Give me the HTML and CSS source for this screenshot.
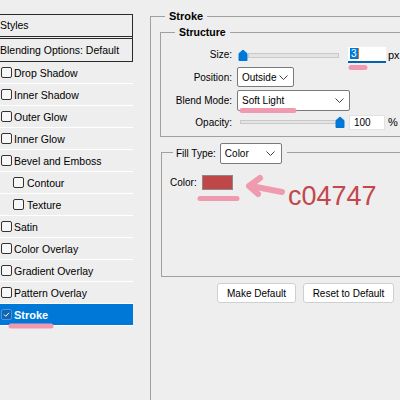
FILE: index.html
```html
<!DOCTYPE html>
<html lang="en">
<head>
  <meta charset="UTF-8" />
  <title>Layer Style</title>
  <link rel="stylesheet" href="styles.css">
</head>
<body>
  <div class="window">
    <div class="styles-list">
      <div class="list-head">Styles</div>
      <div class="list-blend">Blending Options: Default</div>
      <ul class="effects">
        <li><span class="check"></span>Drop Shadow</li>
        <li><span class="check"></span>Inner Shadow</li>
        <li><span class="check"></span>Outer Glow</li>
        <li><span class="check"></span>Inner Glow</li>
        <li><span class="check"></span>Bevel and Emboss</li>
        <li class="sub"><span class="check"></span>Contour</li>
        <li class="sub"><span class="check"></span>Texture</li>
        <li><span class="check"></span>Satin</li>
        <li><span class="check"></span>Color Overlay</li>
        <li><span class="check"></span>Gradient Overlay</li>
        <li><span class="check"></span>Pattern Overlay</li>
        <li class="active">
          <span class="check">
            <svg width="9" height="9" viewBox="0 0 9 9"><polyline points="2,4.5 3.8,6.3 7,2.8" fill="none" stroke="#fff" stroke-width="1"/></svg>
          </span>Stroke
        </li>
      </ul>
    </div>

    <div class="panel">
      <div class="group stroke-group">
        <div class="group-title">Stroke</div>

        <div class="group structure">
          <div class="group-title">Structure</div>

          <div class="field size-row">
            <label>Size:</label>
            <div class="slider size-slider">
              <svg class="thumb" width="10" height="12" viewBox="0 0 10 12"><path d="M1 11.5 V4.5 L5 1 L9 4.5 V11.5 Z" fill="#0078d7" stroke="#0078d7" stroke-linejoin="round"/></svg>
              <div class="track"></div>
            </div>
            <div class="num focused"><span class="sel">3</span><span class="caret"></span></div>
            <span class="unit">px</span>
          </div>

          <div class="field pos-row">
            <label>Position:</label>
            <div class="select pos-select">
              <span>Outside</span>
              <svg width="9" height="5" viewBox="0 0 9 5"><polyline points="0.5,0.5 4.5,4.5 8.5,0.5" fill="none" stroke="#444" stroke-width="1"/></svg>
            </div>
          </div>

          <div class="field blend-row">
            <label>Blend Mode:</label>
            <div class="select blend-select">
              <span>Soft Light</span>
              <svg width="9" height="5" viewBox="0 0 9 5"><polyline points="0.5,0.5 4.5,4.5 8.5,0.5" fill="none" stroke="#444" stroke-width="1"/></svg>
            </div>
          </div>

          <div class="field opacity-row">
            <label>Opacity:</label>
            <div class="slider opacity-slider">
              <div class="track"></div>
              <svg class="thumb" width="10" height="12" viewBox="0 0 10 12"><path d="M1 11.5 V4.5 L5 1 L9 4.5 V11.5 Z" fill="#0078d7" stroke="#0078d7" stroke-linejoin="round"/></svg>
            </div>
            <div class="num">100</div>
            <span class="unit">%</span>
          </div>
        </div>

        <div class="group fill">
          <div class="group-title fill-title">
            <span>Fill Type:</span>
            <div class="select fill-select">
              <span>Color</span>
              <svg width="9" height="5" viewBox="0 0 9 5"><polyline points="0.5,0.5 4.5,4.5 8.5,0.5" fill="none" stroke="#444" stroke-width="1"/></svg>
            </div>
          </div>
          <div class="color-row">
            <label>Color:</label>
            <span class="swatch"></span>
          </div>
        </div>

        <div class="actions">
          <button class="btn-make">Make Default</button>
          <button class="btn-reset">Reset to Default</button>
        </div>
      </div>
    </div>
  </div>

  <!-- pink highlight marks drawn on top -->
  <svg class="marks" width="400" height="400" viewBox="0 0 400 400">
    <g fill="none" stroke="#f09ab0" stroke-linecap="round" stroke-linejoin="round">
      <line x1="11" y1="326" x2="51" y2="326" stroke-width="5"/>
      <line x1="351" y1="67.5" x2="365" y2="67.5" stroke-width="5"/>
      <line x1="242" y1="110.5" x2="294" y2="110.5" stroke-width="5"/>
      <line x1="200" y1="198.5" x2="237" y2="198.5" stroke-width="5"/>
      <polyline points="260,178 249,186 258,194" stroke-width="6"/>
      <line x1="251" y1="186" x2="282" y2="192" stroke-width="6"/>
    </g>
  </svg>
  <div class="note">c04747</div>
</body>
</html>
```

FILE: styles.css
```css
* {
  box-sizing: border-box;
}
body {
  margin: 0;
  font-family: 'Liberation Sans', Arial, sans-serif;
  font-size: 10px;
  color: #000;
  background-color: #eeeeee;
  overflow: hidden;
  position: relative;
}
.window {
  display: flex;
  height: 400px;
}

/* left list of effects */
.styles-list {
  width: 133px;
  flex: none;
  margin-top: 14px;
  font-size: 10.5px;
}
.list-head {
  height: 25px;
  line-height: 21px;
  border-top: 1px solid #2b2b2b;
  border-right: 1px solid #2b2b2b;
  border-bottom: 3px double #2b2b2b;
}
.list-blend {
  height: 23px;
  line-height: 22px;
  border-right: 1px solid #2b2b2b;
  border-bottom: 1px solid #2b2b2b;
}
.effects {
  list-style: none;
  margin: 0;
  padding: 0;
}
.effects li {
  height: 22px;
  display: flex;
  align-items: center;
  gap: 2px;
  border-bottom: 1px solid #fff;
  padding-left: 1px;
}
.effects li.sub {
  padding-left: 13px;
  gap: 3px;
}
.check {
  width: 11px;
  height: 11px;
  border: 1px solid #333;
  border-radius: 2px;
  background: #f7f7f7;
  display: flex;
  align-items: center;
  justify-content: center;
}
.effects li.active {
  background-color: #0078d7;
  color: #fff;
  font-weight: bold;
  font-size: 11px;
}
.effects li.active .check {
  background: #1464b4;
  border-color: #4d95d8;
}

/* right settings panel */
.panel {
  flex: 1;
  margin-left: 17px;
  margin-top: 16px;
}
.group {
  position: relative;
  border-top: 1px solid #a0a0a0;
  border-left: 1px solid #a0a0a0;
}
.group-title {
  position: absolute;
  top: -8px;
  left: 14px;
  padding: 0 4px;
  line-height: 14px;
  background-color: #eeeeee;
  font-weight: bold;
  font-size: 11px;
}
.stroke-group {
  height: 384px;
  padding-left: 9px;
}
.structure {
  margin-top: 15px;
  border-bottom: 1px solid #a0a0a0;
  padding: 13px 0 6px 0;
}
.structure .group-title {
  font-size: 10.5px;
}
.field {
  display: flex;
  align-items: center;
}
.field label {
  width: 71px;
  margin-right: 5px;
  text-align: right;
}
.size-row {
  height: 17px;
}
.pos-row {
  height: 20px;
  margin-top: 4px;
}
.blend-row {
  height: 21px;
  margin-top: 3px;
}
.opacity-row {
  height: 16px;
  margin-top: 3px;
}

.slider {
  display: flex;
  align-items: center;
}
.track {
  height: 5px;
  background: #e4e4e4;
  border: 1px solid #c9c9c9;
}
.size-slider {
  padding-left: 1px;
}
.size-slider .track {
  width: 91px;
  margin-top: 2px;
}
.opacity-slider {
  padding-left: 3px;
}
.opacity-slider .track {
  width: 97px;
  height: 4px;
}
.opacity-slider .thumb {
  margin-left: -2px;
}
.num {
  height: 15px;
  background: #fff;
  display: flex;
  align-items: center;
}
.num.focused {
  width: 38px;
  height: 16px;
  margin-left: 9px;
  padding-left: 2px;
  border-bottom: 2px solid #0063b1;
}
.sel {
  background: #0078d7;
  color: #fff;
  padding: 0 1px;
  line-height: 11px;
}
.caret {
  width: 1px;
  height: 11px;
  background: #d97a22;
}
.opacity-row .num {
  width: 36px;
  margin-left: 4px;
  padding-left: 4px;
  border: 1px solid #e2e2e2;
}
.unit {
  margin-left: 2px;
  font-size: 11px;
}
.opacity-row .unit {
  margin-left: 3px;
}

.select {
  height: 100%;
  background: #fff;
  border: 1px solid #7a7a7a;
  border-radius: 2px;
  display: flex;
  align-items: center;
  justify-content: space-between;
  padding: 0 5px 0 4px;
}
.pos-select {
  width: 57px;
}
.blend-select {
  width: 113px;
}

.fill {
  margin-top: 15px;
  margin-left: 1px;
  height: 125px;
  border-bottom: 1px solid #a0a0a0;
  padding: 22px 0 0 8px;
}
.fill-title {
  top: -10px;
  left: 11px;
  padding: 0 5px 0 3px;
  font-weight: normal;
  font-size: 10px;
  display: flex;
  align-items: center;
}
.fill-select {
  width: 62px;
  height: 21px;
  margin-left: 4px;
  padding-right: 6px;
}
.color-row {
  display: flex;
  align-items: center;
  height: 15px;
}
.color-row label {
  width: 27px;
  margin-right: 5px;
}
.swatch {
  width: 31px;
  height: 15px;
  background-color: #c04747;
  border: 1px solid #8a8a8a;
}

.actions {
  display: flex;
  gap: 7px;
  margin-top: 6px;
  margin-left: 57px;
}
.actions button {
  font: inherit;
  height: 20px;
  background: #fff;
  border: 1px solid #cfcfcf;
  border-radius: 3px;
  padding: 0;
  color: #000;
}
.btn-make {
  width: 79px;
}
.btn-reset {
  width: 91px;
}

/* highlights on top of the dialog */
.marks {
  position: absolute;
  top: 0;
  left: 0;
  pointer-events: none;
}
.note {
  position: absolute;
  left: 288px;
  top: 183px;
  font-size: 27px;
  line-height: 27px;
  color: #c3474d;
}
```
